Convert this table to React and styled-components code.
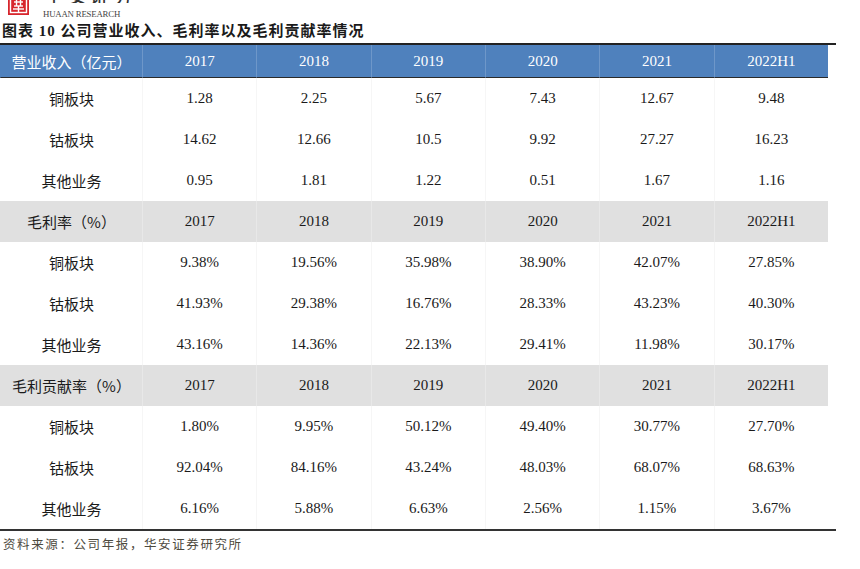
import styled, { createGlobalStyle } from "styled-components";

const GlobalStyle = createGlobalStyle`
  html, body {
    margin: 0;
    padding: 0;
    background: #ffffff;
  }
  body {
    font-family: "Liberation Serif", "Noto Sans CJK SC", serif;
  }
`;

const Page = styled.div`
  width: 860px;
  height: 569px;
  overflow: hidden;
  background: #fff;
`;

const Brand = styled.div`
  height: 20px;
  display: flex;
  align-items: flex-start;
  gap: 14px;
  padding-left: 8px;
  overflow: hidden;
`;

const BrandText = styled.div`
  display: flex;
  flex-direction: column;
  align-items: flex-start;
`;

// only the lower edge of the brand name shows above the crop
const BrandCn = styled.div`
  height: 3px;
  overflow: hidden;
  display: flex;
  align-items: flex-end;
  font-family: "Noto Sans CJK SC", sans-serif;
  font-size: 22px;
  line-height: 19px;
  letter-spacing: 1px;
  color: #333;
`;

const BrandEn = styled.div`
  margin-top: 6px;
  font-family: "Liberation Serif", serif;
  font-size: 8.8px;
  line-height: 10px;
  color: #444;
  letter-spacing: -0.2px;
`;

const Title = styled.div`
  height: 21px;
  padding: 2px 0 0 2px;
  font-family: "Liberation Serif", "Noto Sans CJK SC", serif;
  font-size: 15px;
  font-weight: 700;
  line-height: 18px;
  letter-spacing: 1px;
  color: #1a1a1a;
`;

const TableFrame = styled.div`
  width: 836px;
  border-top: 2px solid #222;
  border-bottom: 2px solid #333;
`;

const Grid = styled.div`
  width: 828px;
  display: grid;
  grid-template-columns: 142px repeat(6, 1fr);
`;

const Cell = styled.div`
  height: ${(p) => (p.$kind === "main" ? "32px" : "41px")};
  display: flex;
  align-items: center;
  justify-content: center;
  font-size: 15px;
  color: ${(p) => (p.$kind === "main" ? "#ffffff" : "#1a1a1a")};
  background: ${(p) =>
    p.$kind === "main" ? "#4f81bd" : p.$kind === "sub" ? "#e0e0e0" : "#ffffff"};
  border-left: 1px solid
    ${(p) =>
      p.$first
        ? "transparent"
        : p.$kind === "main"
        ? "#6e97c9"
        : p.$kind === "sub"
        ? "#e8e8e8"
        : "#f6f6f6"};
  border-bottom: ${(p) => (p.$kind === "main" ? "1px solid #2a2a2a" : "none")};
  white-space: nowrap;
  ${(p) => (p.$label ? "font-family: 'Noto Sans CJK SC', 'Liberation Serif', serif;" : "")}
`;

const Source = styled.div`
  padding: 4px 0 0 3px;
  font-family: "Noto Sans CJK SC", sans-serif;
  font-size: 12.5px;
  line-height: 18px;
  letter-spacing: 1.6px;
  color: #4d4a3e;
`;

function Logo() {
  return (
    <svg width="21" height="20" viewBox="0 0 21 20" style={{ marginTop: "-5px", flex: "none" }}>
      <rect x="0" y="0" width="21" height="20" fill="#d7262d" />
      <g stroke="#fff" strokeWidth="1.4" fill="none">
        <rect x="2.5" y="2.5" width="16" height="15" />
        <line x1="6" y1="7" x2="15" y2="7" />
        <line x1="6" y1="11" x2="15" y2="11" />
        <line x1="8.5" y1="4" x2="8.5" y2="11" />
        <line x1="12.5" y1="4" x2="12.5" y2="11" />
        <line x1="10.5" y1="11" x2="10.5" y2="17" />
        <line x1="5" y1="14" x2="16" y2="14" />
      </g>
    </svg>
  );
}

const years = ["2017", "2018", "2019", "2020", "2021", "2022H1"];

const sections = [
  {
    title: "营业收入（亿元）",
    kind: "main",
    rows: [
      ["铜板块", "1.28", "2.25", "5.67", "7.43", "12.67", "9.48"],
      ["钴板块", "14.62", "12.66", "10.5", "9.92", "27.27", "16.23"],
      ["其他业务", "0.95", "1.81", "1.22", "0.51", "1.67", "1.16"],
    ],
  },
  {
    title: "毛利率（%）",
    kind: "sub",
    rows: [
      ["铜板块", "9.38%", "19.56%", "35.98%", "38.90%", "42.07%", "27.85%"],
      ["钴板块", "41.93%", "29.38%", "16.76%", "28.33%", "43.23%", "40.30%"],
      ["其他业务", "43.16%", "14.36%", "22.13%", "29.41%", "11.98%", "30.17%"],
    ],
  },
  {
    title: "毛利贡献率（%）",
    kind: "sub",
    rows: [
      ["铜板块", "1.80%", "9.95%", "50.12%", "49.40%", "30.77%", "27.70%"],
      ["钴板块", "92.04%", "84.16%", "43.24%", "48.03%", "68.07%", "68.63%"],
      ["其他业务", "6.16%", "5.88%", "6.63%", "2.56%", "1.15%", "3.67%"],
    ],
  },
];

export default function App() {
  return (
    <Page>
      <GlobalStyle />
      <Brand>
        <Logo />
        <BrandText>
          <BrandCn>华安证券</BrandCn>
          <BrandEn>HUAAN RESEARCH</BrandEn>
        </BrandText>
      </Brand>
      <Title>图表 10 公司营业收入、毛利率以及毛利贡献率情况</Title>
      <TableFrame>
        <Grid>
          {sections.map((s) => (
            <>
              <Cell key={s.title} $kind={s.kind} $first $label>
                {s.title}
              </Cell>
              {years.map((y) => (
                <Cell key={s.title + y} $kind={s.kind}>
                  {y}
                </Cell>
              ))}
              {s.rows.map((r) =>
                r.map((v, i) => (
                  <Cell key={s.title + r[0] + i} $first={i === 0} $label={i === 0}>
                    {v}
                  </Cell>
                ))
              )}
            </>
          ))}
        </Grid>
      </TableFrame>
      <Source>资料来源：公司年报，华安证券研究所</Source>
    </Page>
  );
}
